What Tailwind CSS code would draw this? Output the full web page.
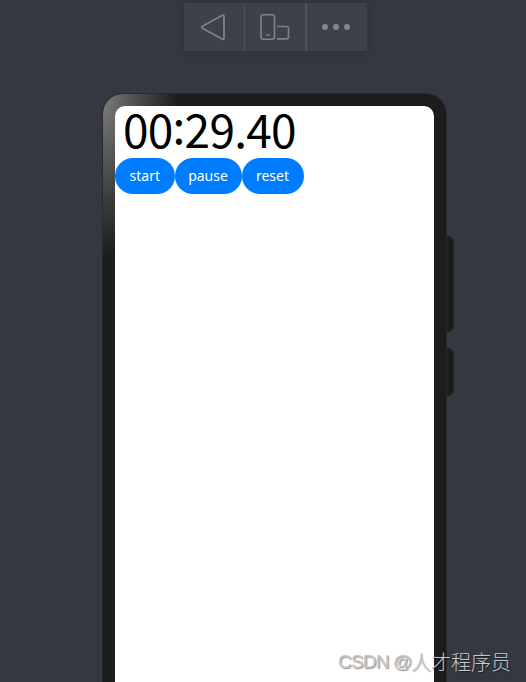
<!DOCTYPE html>
<html lang="en">
<head>
    <meta charset="UTF-8">
    <meta name="viewport" content="width=device-width, initial-scale=1.0">
    <title>Stopwatch Preview</title>
    <script src="https://cdn.jsdelivr.net/npm/@tailwindcss/browser@4"></script>
</head>
<body class="relative h-screen overflow-hidden bg-[#343841] flex flex-col font-['Noto_Sans',sans-serif]">
    <!-- Emulator toolbar -->
    <div class="ml-[184px] mt-[3px] w-[183px] h-12 shrink-0 flex bg-[#3d4149] text-[#808184] shadow-[0_0_8px_rgba(0,0,0,0.15)]">
        <button class="w-[61px] flex items-center justify-center border-r border-[#50535a]">
            <svg class="w-7 h-7" viewBox="0 0 28 28" fill="none" stroke="currentColor" stroke-width="1.8" stroke-linejoin="round"><path d="M22 2.5Q24 1.5 24 3.5V25Q24 27 22 26L2.5 15.2Q1.2 14.2 2.5 13.2Z"/></svg>
        </button>
        <button class="w-[62px] flex items-center justify-center border-r-2 border-[#50535a]">
            <svg class="w-[30px] h-7" viewBox="0 0 30 28" fill="none" stroke="currentColor" stroke-width="1.6"><rect x="1" y="1.8" width="13.5" height="24.4" rx="2.5"/><path d="M6.5 22h3.5M17 13.5h9.5q2 0 2 2v8.2q0 2.2-2 2.2H17"/></svg>
        </button>
        <button class="w-[60px] flex items-center justify-center gap-[5px] pr-[2px]">
            <span class="size-[6px] rounded-full bg-[#85868a]"></span>
            <span class="size-[6px] rounded-full bg-[#85868a]"></span>
            <span class="size-[6px] rounded-full bg-[#85868a]"></span>
        </button>
    </div>

    <!-- Phone -->
    <div class="ml-[102px] mt-[42px] flex h-[589px] items-stretch">
        <div class="w-[345px] rounded-t-[21px] border border-b-0 border-[#292a2d] bg-[#1c1c1c] bg-[radial-gradient(ellipse_75px_155px_at_0px_8px,#7c7c7c_0%,#5e5e5e_28%,#3b3b3b_65%,#1c1c1c_100%)] bg-no-repeat pt-3 px-3">
            <div class="h-full w-[319px] rounded-t-[10px] bg-white">
                <div class="h-[52px] pl-2 text-[46px] leading-[45px] tracking-[-0.75px] text-black whitespace-nowrap font-['Noto_Sans_CJK_SC',sans-serif]">00<span class="relative -top-[4px]">:</span>29.40</div>
                <div class="flex h-[35.5px] text-white text-[14px]">
                    <button class="w-[59.5px] rounded-full bg-[#007dff]">start</button>
                    <button class="w-[67px] rounded-full bg-[#007dff]">pause</button>
                    <button class="w-[62px] rounded-full bg-[#007dff]">reset</button>
                </div>
            </div>
        </div>
        <!-- Side keys -->
        <div class="pt-[143px] flex flex-col gap-4">
            <div class="w-[7px] h-24 rounded-r-[6px] bg-[#1c1c1c] border-r border-[#27282a]"></div>
            <div class="w-[7px] h-12 rounded-r-[6px] bg-[#1c1c1c] border-r border-[#27282a]"></div>
        </div>
    </div>

    <div class="absolute left-[338px] top-[648px] flex whitespace-nowrap leading-7 text-[#c8c8c8] [text-shadow:1px_1px_1px_rgba(0,0,0,0.45)]">
        <span class="w-[73px] text-[19px] tracking-[-0.8px] font-['Liberation_Sans',sans-serif]">CSDN @</span>
        <span class="text-[20px] font-light font-['Noto_Sans_CJK_SC',sans-serif]">人才程序员</span>
    </div>
</body>
</html>
